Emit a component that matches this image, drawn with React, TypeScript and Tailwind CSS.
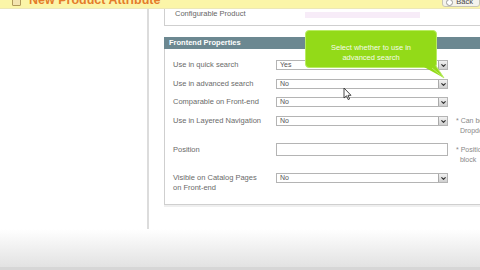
import { ChevronDown } from 'lucide-react';

const font = { fontFamily: '"Liberation Sans", Arial, sans-serif' };

type Row = {
  label: string[];
  kind: 'select' | 'input';
  value?: string;
  note?: string[];
  h: string;
};

const rows: Row[] = [
  { label: ['Use in quick search'], kind: 'select', value: 'Yes', h: 'h-[19px]' },
  { label: ['Use in advanced search'], kind: 'select', value: 'No', h: 'h-[18px]' },
  { label: ['Comparable on Front-end'], kind: 'select', value: 'No', h: 'h-[19px]' },
  {
    label: ['Use in Layered Navigation'],
    kind: 'select',
    value: 'No',
    note: ['Can be used only with catalog input type', 'Dropdown, Multiple Select and Price'],
    h: 'h-[27px]',
  },
  {
    label: ['Position'],
    kind: 'input',
    note: ['Position of attribute in layered navigation', 'block'],
    h: 'h-[30px]',
  },
  { label: ['Visible on Catalog Pages', 'on Front-end'], kind: 'select', value: 'No', h: 'h-[31px]' },
];

const SelectBox = ({ value }: { value: string }) => (
  <div className="flex h-[10px] w-[172px] shrink-0 items-stretch border border-[#b4b4b4] bg-white">
    <span className="flex-1 pl-[3px] text-[7px] leading-[8px] text-[#555]">{value}</span>
    <span className="flex w-[9px] items-center justify-center border-l border-[#aaa] bg-gradient-to-b from-[#f2f2f2] to-[#cfcfcf]">
      <ChevronDown className="h-[7px] w-[7px] text-[#333]" strokeWidth={4} />
    </span>
  </div>
);

export default function App() {
  return (
    <div className="relative h-[270px] w-[480px] overflow-hidden bg-white" style={font}>
      {/* page header strip */}
      <div className="flex h-[9px] items-start justify-between overflow-hidden border-b border-[#ece7b8] bg-[#fbf5a8]">
        <div className="-mt-[6px] flex items-center gap-[8px] pl-[12px]">
          <span className="h-[11px] w-[9px] rounded-[1px] border border-[#b09a5a] bg-[#f3e4b0]" />
          <span className="text-[12.5px] font-bold leading-[13px] text-[#e47c2a]">New Product Attribute</span>
        </div>
        <div className="-mt-[3px] flex h-[10px] items-center gap-[3px] rounded-[3px] border border-[#c9c6b4] bg-[#f4f3ec] pl-[3px] pr-[6px]">
          <span className="h-[7px] w-[7px] rounded-full border border-[#999] bg-white" />
          <span className="text-[7.5px] leading-[8px] text-[#444]">Back</span>
        </div>
      </div>

      <div className="flex h-[220px]">
        {/* left column */}
        <div className="w-[149px] shrink-0 border-r-2 border-[#dcdcdc]" />

        {/* main column */}
        <div className="ml-[15px] flex-1">
          <div className="flex h-[17px] items-start border-b border-l border-[#cfcfcf] pl-[10px] pt-[1px]">
            <span className="text-[7.5px] leading-[8px] text-[#666]">Configurable Product</span>
          </div>

          <div className="mt-[11px] flex h-[12px] items-center bg-[#6c8891] pl-[5px]">
            <span className="text-[7.5px] font-bold leading-[8px] text-white">Frontend Properties</span>
          </div>

          <div className="border-b border-l border-[#cfcfcf] pl-[8px] pt-[11px] shadow-[0_2px_0_#efefef]">
            {rows.map((r) => (
              <div key={r.label[0]} className={`flex items-start ${r.h}`}>
                <div
                  className={`w-[103px] shrink-0 text-[7.5px] leading-[10px] text-[#6a6a6a] ${
                    r.kind === 'input' ? 'pt-[2px]' : ''
                  }`}
                >
                  {r.label.map((l) => (
                    <div key={l} className="whitespace-nowrap">
                      {l}
                    </div>
                  ))}
                </div>
                {r.kind === 'select' ? (
                  <SelectBox value={r.value ?? ''} />
                ) : (
                  <div className="h-[13px] w-[172px] shrink-0 border border-[#b4b4b4] bg-white" />
                )}
                {r.note && (
                  <div
                    className={`ml-[8px] text-[7px] leading-[10px] text-[#888] ${
                      r.kind === 'input' ? 'pt-[2px]' : ''
                    }`}
                  >
                    {r.note.map((n, i) => (
                      <div key={n} className="whitespace-nowrap">
                        {i === 0 ? '* ' : '\u00a0\u00a0'}
                        {n}
                      </div>
                    ))}
                  </div>
                )}
              </div>
            ))}
          </div>
        </div>
      </div>

      {/* bottom fade */}
      <div className="h-[38px] bg-gradient-to-b from-white to-[#e2e2e2]" />
      <div className="h-[3px] bg-[#d6d6d6]" />

      {/* faint ghost band */}
      <div className="absolute left-[305px] top-[12px] h-[6px] w-[115px] bg-[#f7ecf8]" />

      {/* tooltip */}
      <div className="absolute left-[305px] top-[30px] h-[38px] w-[132px] rounded-[4px] border border-[#b9ec63] bg-[#93da18] pt-[12px] text-center text-[7.5px] leading-[10px] text-[#f4fbe8]">
        <div>Select whether to use in</div>
        <div>advanced search</div>
      </div>
      <svg className="absolute left-[422px] top-[64px]" width="24" height="16" viewBox="0 0 24 16">
        <polygon points="2,3 14,2 22,14" fill="#93da18" />
        <polyline points="14,2 22,14 10,4" fill="none" stroke="#b9ec63" strokeWidth="1" />
      </svg>

      {/* mouse pointer */}
      <svg className="absolute left-[343px] top-[87px]" width="9" height="14" viewBox="0 0 9 14">
        <path d="M1 1 L1 11 L3.5 8.8 L5.2 12.6 L6.6 12 L5 8.3 L8 8.3 Z" fill="#fff" stroke="#333" strokeWidth="0.9" />
      </svg>
    </div>
  );
}
